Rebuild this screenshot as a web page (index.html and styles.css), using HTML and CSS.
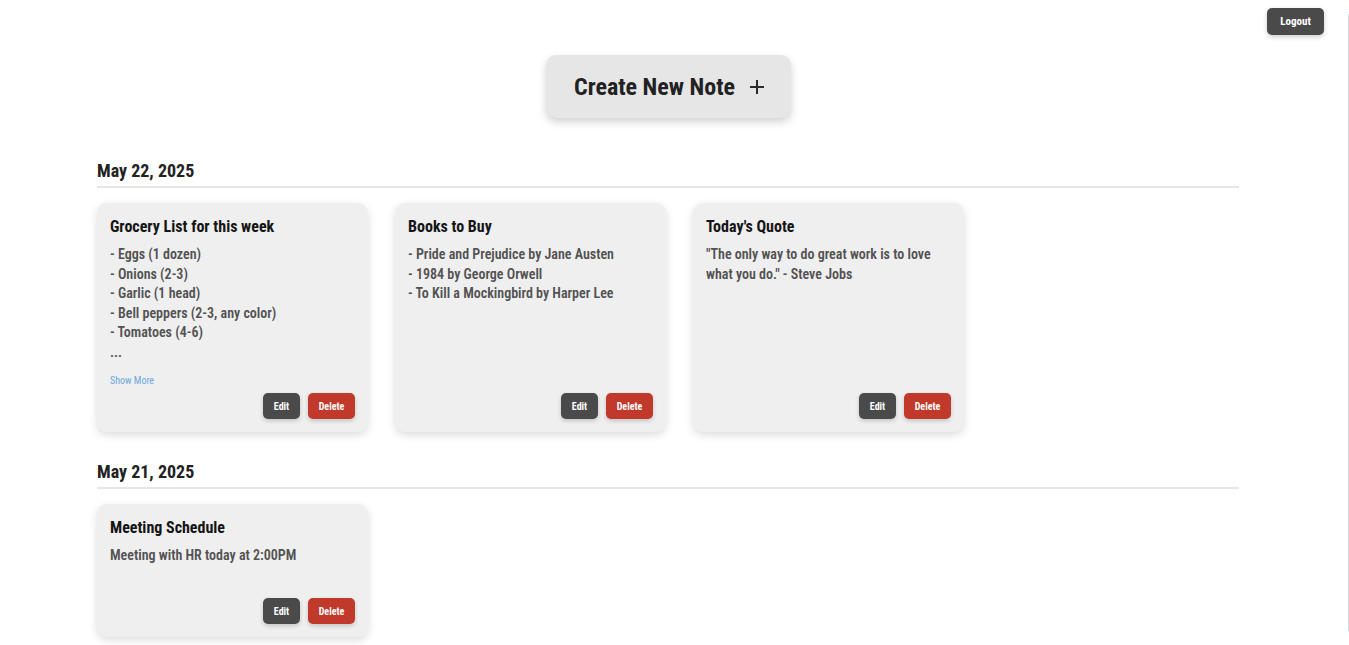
FILE: index.html
```html
<!DOCTYPE html>
<html lang="en">
<head>
<meta charset="utf-8">
<title>Notes</title>
<link rel="stylesheet" href="styles.css">
</head>
<body>
<button class="logout">Logout</button>
<div class="edge-line"></div>
<main class="page">
  <div class="create-wrap">
    <button class="create-btn">Create New Note
      <svg class="plus" width="14" height="14" viewBox="0 0 14 14" aria-hidden="true"><path d="M7 0V14M0 7H14" stroke="#2a2a2a" stroke-width="2" fill="none"/></svg>
    </button>
  </div>

  <section class="day">
    <h2 class="day-title">May 22, 2025</h2>
    <div class="notes">
      <article class="note">
        <h3 class="note-title">Grocery List for this week</h3>
        <div class="note-body">
          <div>- Eggs (1 dozen)</div>
          <div>- Onions (2-3)</div>
          <div>- Garlic (1 head)</div>
          <div>- Bell peppers (2-3, any color)</div>
          <div>- Tomatoes (4-6)</div>
          <div>...</div>
        </div>
        <a class="show-more" href="#">Show More</a>
        <div class="actions">
          <button class="btn btn-edit">Edit</button>
          <button class="btn btn-delete">Delete</button>
        </div>
      </article>
      <article class="note">
        <h3 class="note-title">Books to Buy</h3>
        <div class="note-body">
          <div>- Pride and Prejudice by Jane Austen</div>
          <div>- 1984 by George Orwell</div>
          <div>- To Kill a Mockingbird by Harper Lee</div>
        </div>
        <div class="actions">
          <button class="btn btn-edit">Edit</button>
          <button class="btn btn-delete">Delete</button>
        </div>
      </article>
      <article class="note">
        <h3 class="note-title">Today's Quote</h3>
        <div class="note-body">
          <div>"The only way to do great work is to love what you do." - Steve Jobs</div>
        </div>
        <div class="actions">
          <button class="btn btn-edit">Edit</button>
          <button class="btn btn-delete">Delete</button>
        </div>
      </article>
    </div>
  </section>

  <section class="day">
    <h2 class="day-title">May 21, 2025</h2>
    <div class="notes">
      <article class="note">
        <h3 class="note-title">Meeting Schedule</h3>
        <div class="note-body">
          <div>Meeting with HR today at 2:00PM</div>
        </div>
        <div class="actions">
          <button class="btn btn-edit">Edit</button>
          <button class="btn btn-delete">Delete</button>
        </div>
      </article>
    </div>
  </section>
</main>
</body>
</html>
```

FILE: styles.css
```css
* { box-sizing: border-box; }
html, body { margin: 0; padding: 0; background: #ffffff; }
body {
  font-family: Roboto, "Liberation Sans", sans-serif;
  font-stretch: 75%;
  color: #222;
  position: relative;
  min-height: 645px;
}
button { font-family: inherit; font-stretch: inherit; cursor: pointer; border: none; }

.logout {
  position: absolute;
  top: 8px;
  right: 25px;
  width: 57px;
  height: 27px;
  border-radius: 5px;
  background: #4a4a4a;
  color: #fff;
  font-size: 11px;
  font-weight: 700;
  box-shadow: 0 2px 5px rgba(0,0,0,0.2);
}
.edge-line {
  position: fixed;
  top: 14px;
  bottom: 14px;
  right: 0;
  width: 1px;
  background: #d3dbe2;
}

.page {
  width: 1142px;
  margin-left: 97px;
  padding-top: 55px;
}
.create-wrap {
  display: flex;
  justify-content: center;
}
.create-btn {
  width: 245px;
  height: 63px;
  border-radius: 10px;
  background: #e6e6e6;
  color: #222;
  font-size: 24px;
  font-weight: 700;
  font-stretch: 78%;
  box-shadow: 0 4px 8px rgba(0,0,0,0.18);
  display: flex;
  align-items: center;
  justify-content: center;
  gap: 15px;
  padding: 0 0 0 2px;
}
.plus { display: block; margin-top: 1px; }

.day { margin-top: 42px; }
.day + .day { margin-top: 29px; }
.day-title {
  margin: 0;
  font-size: 18px;
  line-height: 22px;
  font-weight: 700;
  color: #222;
  padding-bottom: 4px;
  border-bottom: 2px solid #e6e6e6;
}
.notes {
  display: grid;
  grid-template-columns: repeat(auto-fill, 271px);
  column-gap: 27px;
  row-gap: 28px;
  margin-top: 15px;
}
.note {
  background: #efefef;
  border-radius: 10px;
  box-shadow: 0 3px 8px rgba(0,0,0,0.14);
  padding: 13px;
  display: flex;
  flex-direction: column;
  min-height: 133px;
}
.note-title {
  margin: 0;
  font-size: 16px;
  line-height: 21px;
  font-weight: 700;
  color: #151515;
}
.note-body {
  margin-top: 8px;
  font-size: 14px;
  line-height: 19.5px;
  font-weight: 600;
  color: #525252;
}
.show-more {
  margin-top: 12px;
  font-size: 10px;
  line-height: 14px;
  color: #6aa6dc;
  text-decoration: none;
}
.actions {
  margin-top: auto;
  padding-top: 5px;
  display: flex;
  justify-content: flex-end;
  gap: 8px;
}
.btn {
  height: 26px;
  border-radius: 5px;
  color: #fff;
  font-size: 10px;
  font-weight: 700;
  box-shadow: 0 2px 4px rgba(0,0,0,0.18);
  padding: 0;
}
.btn-edit { width: 37px; background: #4a4a4a; }
.btn-delete { width: 47px; background: #c0392b; }
```
